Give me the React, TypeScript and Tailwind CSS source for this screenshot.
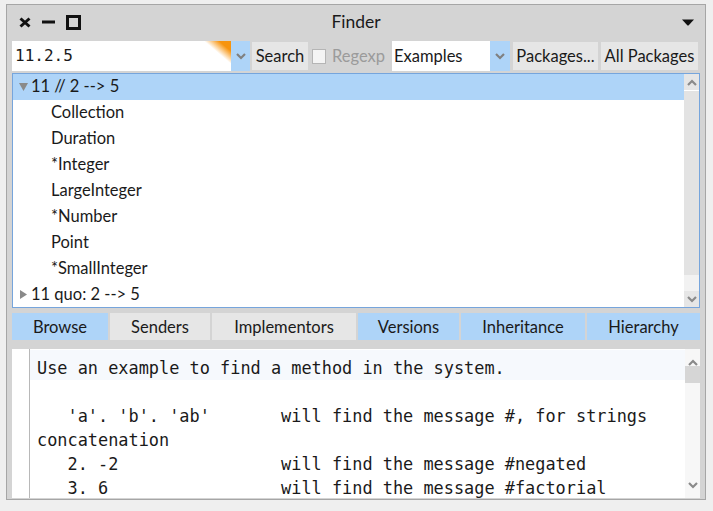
import React from "react";

const ui = { fontFamily: "Lato, 'Noto Sans', sans-serif" };
const mono = { fontFamily: "'DejaVu Sans Mono', monospace" };

function Chevron({ up = false, color = "#808080" }: { up?: boolean; color?: string }) {
  return (
    <svg width="10" height="7" viewBox="0 0 10 7">
      <path
        d={up ? "M1 6 L5 2 L9 6" : "M1 1 L5 5 L9 1"}
        fill="none"
        stroke={color}
        strokeWidth="2.2"
      />
    </svg>
  );
}

function Tri({ open }: { open: boolean }) {
  return open ? (
    <svg width="9" height="8" viewBox="0 0 9 8">
      <path d="M0 0 L9 0 L4.5 8 Z" fill="#8a8a8a" />
    </svg>
  ) : (
    <svg width="7" height="9" viewBox="0 0 7 9">
      <path d="M0 0 L7 4.5 L0 9 Z" fill="#8a8a8a" />
    </svg>
  );
}

const classes = [
  "Collection",
  "Duration",
  "*Integer",
  "LargeInteger",
  "*Number",
  "Point",
  "*SmallInteger",
];

const tabs: { label: string; w: string; active: boolean }[] = [
  { label: "Browse", w: "w-[96px]", active: true },
  { label: "Senders", w: "w-[100px]", active: false },
  { label: "Implementors", w: "w-[144px]", active: false },
  { label: "Versions", w: "w-[101px]", active: true },
  { label: "Inheritance", w: "w-[124px]", active: true },
  { label: "Hierarchy", w: "w-[113px]", active: true },
];

export default function App() {
  return (
    <div className="w-[713px] h-[511px] bg-[#efefef] pt-[4px] pl-[6px] overflow-hidden" style={ui}>
      <div className="w-[700px] h-[496px] border border-[#a6a6a6] bg-[#d4d4d4] flex flex-col text-[#1a1a1a]">
        {/* title bar */}
        <div className="h-[36px] flex items-center relative pb-[2px]">
          <div className="flex items-center pl-[12px] gap-[11px]">
            <svg width="12" height="11" viewBox="0 0 12 11">
              <path d="M1.5 1.5 L10.5 9.5 M10.5 1.5 L1.5 9.5" stroke="#111" strokeWidth="3" />
            </svg>
            <svg width="13" height="4" viewBox="0 0 13 4">
              <rect x="0" y="0.5" width="13" height="3" fill="#111" />
            </svg>
            <svg width="15" height="15" viewBox="0 0 15 15">
              <rect x="1.5" y="1.5" width="12" height="12" fill="none" stroke="#111" strokeWidth="3" />
            </svg>
          </div>
          <div className="absolute inset-0 flex items-center justify-center pb-[1px] text-[17.5px]">Finder</div>
          <div className="ml-auto pr-[11px]">
            <svg width="12" height="7" viewBox="0 0 12 7">
              <path d="M0 0.5 L12 0.5 L6.5 6.5 L5.5 6.5 Z" fill="#111" />
            </svg>
          </div>
        </div>

        {/* toolbar */}
        <div className="h-[30px] flex items-center px-[5px] text-[16.5px]">
          <div className="w-[219px] h-[30px] bg-white relative flex items-center pl-[3px] shrink-0" style={mono}>
            <span className="text-[16px]">11.2.5</span>
            <svg className="absolute right-0 top-0" width="27" height="23" viewBox="0 0 27 23">
              <defs>
                <linearGradient id="og" x1="0" y1="1" x2="1" y2="0">
                  <stop offset="0.5" stopColor="#ffffff" stopOpacity="1" />
                  <stop offset="0.78" stopColor="#f7940f" />
                </linearGradient>
              </defs>
              <path d="M0 0 L27 0 L27 23 Z" fill="url(#og)" />
            </svg>
          </div>
          <div className="w-[19px] h-[30px] bg-[#aed4f8] flex items-center justify-center shrink-0">
            <Chevron />
          </div>
          <div className="ml-[2px] w-[56px] h-[28px] bg-[#e6e6e6] flex items-center justify-center shrink-0">Search</div>
          <div className="ml-[4px] w-[14px] h-[15px] border border-[#b5b5b5] bg-[#f4f4f4] shrink-0" />
          <div className="ml-[6px] w-[51px] text-[#9b9b9b] shrink-0 whitespace-nowrap">Regexp</div>
          <div className="ml-[9px] w-[98px] h-[30px] bg-white flex items-center pl-[2px] shrink-0">Examples</div>
          <div className="w-[20px] h-[30px] bg-[#aed4f8] flex items-center justify-center shrink-0">
            <Chevron />
          </div>
          <div className="ml-[3px] w-[85px] h-[28px] bg-[#e6e6e6] flex items-center justify-center shrink-0 whitespace-nowrap">Packages...</div>
          <div className="ml-[3px] w-[97px] h-[28px] bg-[#e6e6e6] flex items-center justify-center shrink-0 whitespace-nowrap">All Packages</div>
        </div>

        {/* list */}
        <div className="mt-[2px] mx-[5px] h-[235px] border border-[#76a5dc] bg-white flex overflow-hidden">
          <div className="flex-1 overflow-hidden text-[16.5px]">
            <div className="h-[26px] bg-[#aed4f8] flex items-center pb-[2px]">
              <div className="w-[18px] flex justify-center pl-[3px] pt-[1px]">
                <Tri open />
              </div>
              <span>11 // 2 --&gt; 5</span>
            </div>
            {classes.map((c) => (
              <div key={c} className="h-[26px] flex items-center pl-[38px] pb-[2px]">
                {c}
              </div>
            ))}
            <div className="h-[26px] flex items-center pb-[2px]">
              <div className="w-[18px] flex justify-center pl-[3px] pt-[1px]">
                <Tri open={false} />
              </div>
              <span>11 quo: 2 --&gt; 5</span>
            </div>
          </div>
          <div className="w-[15px] flex flex-col bg-[#f2f2f2]">
            <div className="h-[16px] bg-[#e6e6e6] flex items-center justify-center">
              <Chevron up color="#8a8a8a" />
            </div>
            <div className="h-[1px] bg-white" />
            <div className="h-[184px] bg-[#e3e3e3]" />
            <div className="flex-1 bg-[#f2f2f2]" />
            <div className="h-[16px] bg-[#e6e6e6] flex items-center justify-center">
              <Chevron color="#8a8a8a" />
            </div>
          </div>
        </div>

        {/* tabs */}
        <div className="mt-[5px] mx-[5px] h-[27px] flex gap-[2px] text-[16.5px]">
          {tabs.map((t) => (
            <div
              key={t.label}
              className={`${t.w} h-[27px] flex items-center justify-center pt-[2px] ${t.active ? "bg-[#aed4f8]" : "bg-[#e6e6e6]"}`}
            >
              {t.label}
            </div>
          ))}
        </div>

        {/* text area */}
        <div className="mt-[9px] mx-[5px] h-[149px] bg-white flex overflow-hidden">
          <div className="w-[18px] border-r border-[#b8b8b8]" />
          <div className="flex-1 overflow-hidden text-[16.9px] leading-[24px] whitespace-pre" style={mono}>
            <div className="mt-[1px] h-[30px] pt-[6px] pl-[7px] bg-[#f6f9fd]">Use an example to find a method in the system.</div>
            <div className="pl-[7px] h-[24px]"> </div>
            <div className="pl-[7px]">{"   'a'. 'b'. 'ab'       will find the message #, for strings"}</div>
            <div className="pl-[7px]">concatenation</div>
            <div className="pl-[7px]">{"   2. -2                will find the message #negated"}</div>
            <div className="pl-[7px]">{"   3. 6                 will find the message #factorial"}</div>
          </div>
          <div className="w-[15px] flex flex-col bg-[#f7f7f7]">
            <div className="h-[17px] flex items-end justify-center">
              <Chevron up color="#8a8a8a" />
            </div>
            <div className="h-[17px] bg-[#d6d6d6]" />
            <div className="flex-1" />
            <div className="h-[18px] flex items-start justify-center pt-[2px]">
              <Chevron color="#8a8a8a" />
            </div>
          </div>
        </div>
      </div>
    </div>
  );
}
